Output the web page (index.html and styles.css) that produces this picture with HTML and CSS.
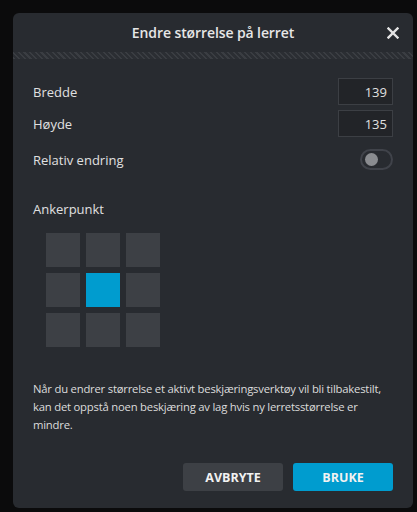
FILE: index.html
```html
<!DOCTYPE html>
<html lang="no">
<head>
<meta charset="utf-8">
<link rel="stylesheet" href="styles.css">
</head>
<body>
<div class="dialog">
  <div class="header">
    <div class="title">Endre størrelse på lerret</div>
    <button class="close" aria-label="Lukk">
      <svg width="12" height="12" viewBox="0 0 12 12"><path d="M1.5 1.5 L10.5 10.5 M10.5 1.5 L1.5 10.5" stroke="#e4e4e4" stroke-width="2.4" stroke-linecap="square"/></svg>
    </button>
  </div>
  <div class="hatch"></div>
  <div class="body">
    <div class="row"><span class="label">Bredde</span><div class="num">139</div></div>
    <div class="row"><span class="label">Høyde</span><div class="num">135</div></div>
    <div class="row toggle-row"><span class="label">Relativ endring</span><div class="toggle"><div class="knob"></div></div></div>
    <div class="anchor-label">Ankerpunkt</div>
    <div class="grid">
      <div class="cell"></div><div class="cell"></div><div class="cell"></div>
      <div class="cell"></div><div class="cell active"></div><div class="cell"></div>
      <div class="cell"></div><div class="cell"></div><div class="cell"></div>
    </div>
    <p class="note">Når du endrer størrelse et aktivt beskjæringsverktøy vil bli tilbakestilt, kan det oppstå noen beskjæring av lag hvis ny lerretsstørrelse er mindre.</p>
    <div class="actions">
      <button class="btn cancel">AVBRYTE</button>
      <button class="btn apply">BRUKE</button>
    </div>
  </div>
</div>
</body>
</html>
```
FILE: styles.css
```css
html, body {
  margin: 0;
  padding: 0;
  background: #0b0b0c;
  font-family: "Open Sans", "Noto Sans", sans-serif;
}
body {
  padding: 13px 4px 4px 13px;
}
.dialog {
  width: 400px;
  height: 495px;
  background: #282b30;
  border-radius: 6px;
  display: flex;
  flex-direction: column;
  overflow: hidden;
}
.header {
  height: 39px;
  display: flex;
  align-items: center;
  justify-content: center;
  position: relative;
}
.title {
  color: #e6e6e6;
  font-size: 14px;
  font-weight: 600;
  letter-spacing: -0.1px;
}
.close {
  position: absolute;
  right: 14px;
  top: 14px;
  width: 12px;
  height: 12px;
  padding: 0;
  border: 0;
  background: none;
  display: flex;
}
.hatch {
  height: 7px;
  background: repeating-linear-gradient(45deg, #3a3d42 0 1.5px, #2b2e33 1.5px 4px);
}
.body {
  padding: 19px 20px 0 20px;
  display: flex;
  flex-direction: column;
}
.row {
  display: flex;
  justify-content: space-between;
  align-items: center;
  height: 27px;
  margin-bottom: 5px;
}
.label {
  color: #e0e0e0;
  font-size: 13px;
}
.num {
  width: 48px;
  height: 25px;
  padding-right: 5px;
  border: 1px solid #3c3f44;
  background: #222428;
  color: #e0e0e0;
  font-size: 13px;
  box-sizing: content-box;
  display: flex;
  align-items: center;
  justify-content: flex-end;
}
.toggle-row {
  margin-top: 7px;
  height: 21px;
}
.toggle {
  width: 26px;
  height: 17px;
  border: 2px solid #40434a;
  border-radius: 11px;
  display: flex;
  align-items: center;
  padding-left: 3px;
  box-sizing: content-box;
}
.knob {
  width: 13px;
  height: 13px;
  border-radius: 50%;
  background: #8a8c90;
}
.anchor-label {
  margin-top: 25px;
  color: #e0e0e0;
  font-size: 13px;
  line-height: 18px;
}
.grid {
  margin-top: 15px;
  margin-left: 13px;
  display: grid;
  grid-template-columns: repeat(3, 34px);
  grid-auto-rows: 34px;
  gap: 6px;
}
.cell {
  background: #3d4045;
}
.cell.active {
  background: #009ccf;
}
.note {
  margin: 33px 0 0 0;
  color: #dcdcdc;
  font-size: 11.3px;
  line-height: 18px;
  letter-spacing: -0.22px;
}
.actions {
  margin-top: 29px;
  display: flex;
  justify-content: flex-end;
  gap: 10px;
}
.btn {
  width: 100px;
  height: 28px;
  border: 0;
  border-radius: 3px;
  font-family: "Open Sans", "Noto Sans", sans-serif;
  font-weight: 700;
  font-size: 12.5px;
  color: #f2f2f2;
}
.cancel { background: #3d4045; }
.apply { background: #009ccf; }
```
